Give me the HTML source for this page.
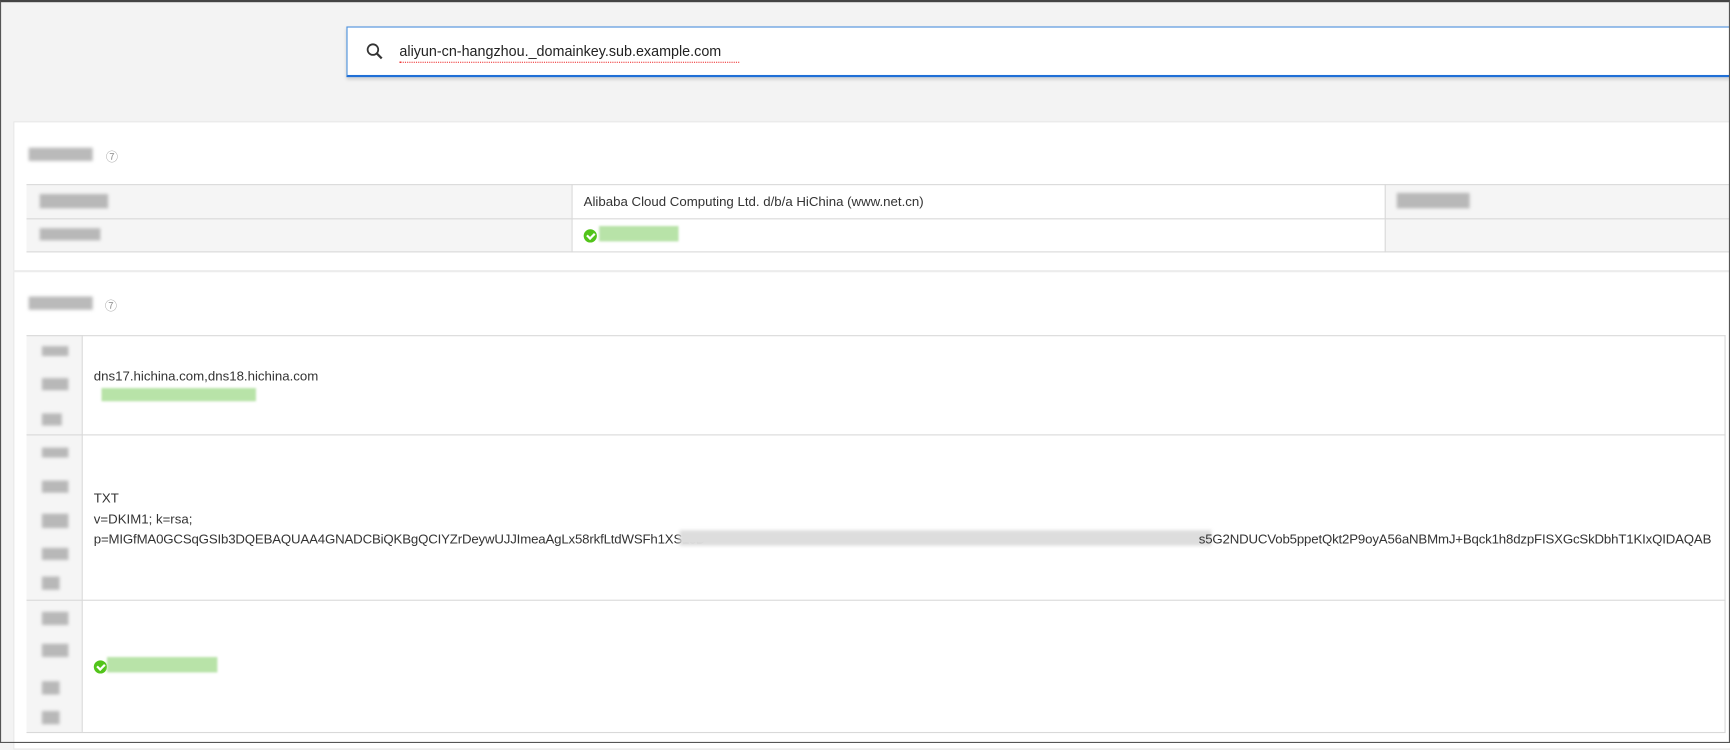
<!DOCTYPE html>
<html><head><meta charset="utf-8"><style>
*{margin:0;padding:0;box-sizing:border-box}
html,body{width:1730px;height:743px;overflow:hidden;background:#f3f3f3}
#w{position:absolute;left:0;top:0;width:1568px;height:674px;transform:scale(1.10332,1.10237);transform-origin:0 0;font-family:"Liberation Sans","Noto Sans CJK SC",sans-serif;font-size:12px;color:#333}
.a{position:absolute}
.blur{position:absolute;background:#a9a9a9;filter:blur(1.5px);opacity:.8}
.g{position:absolute;background:#b8e3a8;filter:blur(1px)}
.t{position:absolute;white-space:nowrap;font-size:12px;color:#333}
.hl{position:absolute;height:1px;background:#d9d9d9}
.vl{position:absolute;width:1px;background:#d9d9d9}
.chk{position:absolute;width:12px;height:12px;border-radius:50%;background:#52c41a}
.chk:after{content:"";position:absolute;left:3px;top:2.5px;width:5px;height:3px;border-left:2px solid #fff;border-bottom:2px solid #fff;transform:rotate(-45deg)}
</style></head><body>
<div id="w">
<div class="a" style="left:0;top:0;width:1568px;height:674px;border:1px solid #555;border-top:2px solid #444;z-index:10;pointer-events:none"></div>
<div class="a" style="left:314px;top:24px;width:1256px;height:46px;background:#fff;border:1px solid #4a8fdc;border-right:none;border-bottom:2px solid #1f6fd6;box-shadow:0 2px 3px rgba(0,0,0,.15)"></div>
<svg class="a" style="left:331px;top:38px" width="18" height="18" viewBox="0 0 18 18"><circle cx="7" cy="7" r="4.8" fill="none" stroke="#333" stroke-width="1.6"/><path d="M10.5 10.5 L15 15" stroke="#333" stroke-width="2"/></svg>
<div class="t" style="left:362px;top:39px;font-size:13px;color:#222">aliyun-cn-hangzhou._domainkey.sub.example.com</div>
<div class="a" style="left:362px;top:56px;width:308px;height:1px;border-bottom:1px dotted #e33"></div>
<div class="a" style="left:12px;top:110px;width:1560px;height:570px;background:#fff;border:1px solid #e6e6e6"></div>
<div class="blur" style="left:26px;top:134px;width:58px;height:12px"></div>
<div class="t" style="left:96px;top:134px;color:#999;font-size:11px">⑦</div>
<div class="a" style="left:24px;top:167px;width:494px;height:62px;background:#f5f5f5"></div>
<div class="a" style="left:1255px;top:167px;width:315px;height:62px;background:#f5f5f5"></div>
<div class="hl" style="left:24px;top:167px;width:1546px"></div>
<div class="hl" style="left:24px;top:198px;width:1546px"></div>
<div class="hl" style="left:24px;top:228px;width:1546px"></div>
<div class="vl" style="left:518px;top:167px;height:62px"></div>
<div class="vl" style="left:1255px;top:167px;height:62px"></div>
<div class="blur" style="left:36px;top:176px;width:62px;height:13px"></div>
<div class="blur" style="left:36px;top:207px;width:55px;height:11px"></div>
<div class="t" style="left:529px;top:176px">Alibaba Cloud Computing Ltd. d/b/a HiChina (www.net.cn)</div>
<div class="chk" style="left:529px;top:208px"></div>
<div class="g" style="left:543px;top:205px;width:72px;height:14px"></div>
<div class="blur" style="left:1266px;top:175px;width:66px;height:14px"></div>
<div class="a" style="left:12px;top:245px;width:1560px;height:2px;background:#ececec"></div>
<div class="blur" style="left:26px;top:269px;width:58px;height:12px"></div>
<div class="t" style="left:95px;top:269px;color:#999;font-size:11px">⑦</div>
<div class="a" style="left:24px;top:304px;width:50px;height:360px;background:#f5f5f5"></div>
<div class="hl" style="left:24px;top:304px;width:1540px"></div>
<div class="hl" style="left:24px;top:394px;width:1540px"></div>
<div class="hl" style="left:24px;top:544px;width:1540px"></div>
<div class="hl" style="left:24px;top:664px;width:1540px"></div>
<div class="vl" style="left:74px;top:304px;height:360px"></div>
<div class="vl" style="left:1563px;top:304px;height:360px"></div>
<div class="blur" style="left:38px;top:314px;width:24px;height:9px"></div>
<div class="blur" style="left:38px;top:343px;width:24px;height:11px"></div>
<div class="blur" style="left:38px;top:375px;width:18px;height:11px"></div>
<div class="blur" style="left:38px;top:406px;width:24px;height:9px"></div>
<div class="blur" style="left:38px;top:436px;width:24px;height:11px"></div>
<div class="blur" style="left:38px;top:466px;width:24px;height:13px"></div>
<div class="blur" style="left:38px;top:497px;width:24px;height:11px"></div>
<div class="blur" style="left:38px;top:523px;width:16px;height:12px"></div>
<div class="blur" style="left:38px;top:555px;width:24px;height:12px"></div>
<div class="blur" style="left:38px;top:584px;width:24px;height:12px"></div>
<div class="blur" style="left:38px;top:618px;width:16px;height:12px"></div>
<div class="blur" style="left:38px;top:645px;width:16px;height:12px"></div>
<div class="t" style="left:85px;top:334px">dns17.hichina.com,dns18.hichina.com</div>
<div class="g" style="left:92px;top:352px;width:140px;height:12px"></div>
<div class="t" style="left:85px;top:445px">TXT</div>
<div class="t" style="left:85px;top:464px">v=DKIM1; k=rsa;</div>
<div class="t" style="left:85px;top:482px;letter-spacing:-0.15px">p=MIGfMA0GCSqGSIb3DQEBAQUAA4GNADCBiQKBgQCIYZrDeywUJJImeaAgLx58rkfLtdWSFh1XS1sD</div>
<div class="a" style="left:616px;top:481px;width:482px;height:14px;background:#ddd;filter:blur(1.5px)"></div>
<div class="t" style="right:17px;top:482px;letter-spacing:-0.15px">s5G2NDUCVob5ppetQkt2P9oyA56aNBMmJ+Bqck1h8dzpFISXGcSkDbhT1KIxQIDAQAB</div>
<div class="chk" style="left:85px;top:599px"></div>
<div class="g" style="left:97px;top:596px;width:100px;height:14px"></div>
</div>
</body></html>
